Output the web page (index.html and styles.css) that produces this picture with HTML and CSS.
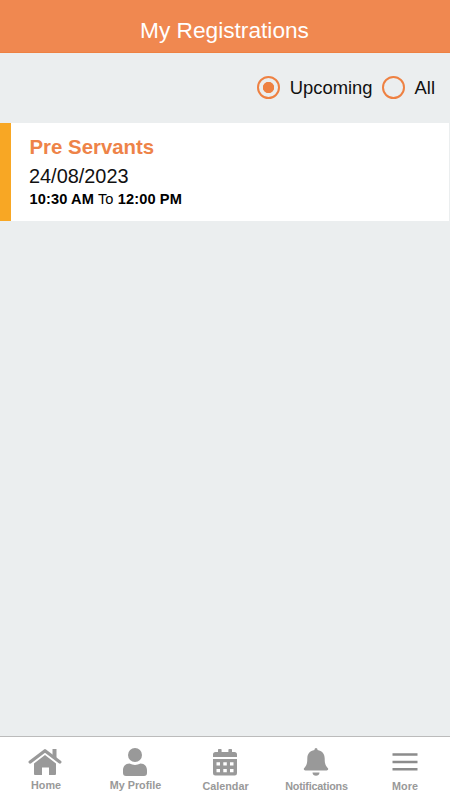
FILE: index.html
```html
<!DOCTYPE html>
<html lang="en">
<head>
<meta charset="utf-8">
<title>My Registrations</title>
<link rel="stylesheet" href="styles.css">
</head>
<body>
<div class="app">
  <header class="header"><h1 class="title">My Registrations</h1></header>
  <main class="content">
    <div class="filters">
      <div class="option"><span class="radio checked"></span><span>Upcoming</span></div>
      <div class="option"><span class="radio"></span><span>All</span></div>
    </div>
    <article class="card">
      <h2 class="name">Pre Servants</h2>
      <div class="date">24/08/2023</div>
      <div class="time"><b>10:30 AM</b> To <b>12:00 PM</b></div>
    </article>
  </main>
  <nav class="tabs">
    <a class="tab home">
      <svg class="icon wide" viewBox="0 0 34 28"><path d="M2.200 14 17 2.700l14.800 11.300" fill="none" stroke="currentColor" stroke-width="3.300" stroke-linecap="round" stroke-linejoin="round"/><path d="M24.500 1h4v9.500l-4-3.200zM17 7l11 8.400V25.900a1 1 0 0 1-1 1h-6v-7.400h-7v7.400H7a1 1 0 0 1-1-1V15.400z"/></svg>
      <span>Home</span>
    </a>
    <a class="tab profile">
      <svg class="icon" viewBox="0 0 26 28"><circle cx="13" cy="7" r="7"/><path d="M7.500 15.500c3.500 1.900 7.500 1.900 11 0 4.200 0 6.500 3 6.500 7v2.500a3 3 0 0 1-3 3H4a3 3 0 0 1-3-3v-2.500c0-4 2.300-7 6.500-7z"/></svg>
      <span>My Profile</span>
    </a>
    <a class="tab calendar">
      <svg class="icon" viewBox="0 0 26 28"><path fill-rule="evenodd" d="M1 9V6.500A2.500 2.500 0 0 1 3.500 4H6V1.700q0-.7.700-.7h2.200q.7 0 .7.700V4h6.800V1.700q0-.7.700-.7h2.200q.7 0 .7.700V4h2.500A2.500 2.500 0 0 1 25 6.500V9zM1 11h24v14.300a2.300 2.300 0 0 1-2.300 2.300H3.300A2.300 2.300 0 0 1 1 25.300zM4.500 14.200v3.300H8v-3.300zM11.300 14.200v3.300h3.500v-3.300zM18 14.200v3.300h3.500v-3.300zM4.500 20.900v3.300H8v-3.300zM11.300 20.900v3.300h3.500v-3.300zM18 20.900v3.300h3.500v-3.300z"/></svg>
      <span>Calendar</span>
    </a>
    <a class="tab notifications">
      <svg class="icon" viewBox="0 0 26 28"><path d="M11.500 2.100V1.600a1.500 1.500 0 0 1 3 0v.5c4.600.8 7.200 4 7.200 8.400 0 6 1.100 7.300 3 9.400 1.100 1.200.3 2.700-1.100 2.700H2.400c-1.400 0-2.200-1.500-1.100-2.700 1.900-2.100 3-3.400 3-9.400 0-4.400 2.600-7.600 7.200-8.400zM9.500 24.500h7c0 4.300-7 4.300-7 0z"/></svg>
      <span>Notifications</span>
    </a>
    <a class="tab more">
      <svg class="icon" viewBox="0 0 26 28"><path d="M.5 5.200h25v2.600H.5zM.5 12.700h25v2.600H.5zM.5 19.900h25v2.600H.5z"/></svg>
      <span>More</span>
    </a>
  </nav>
</div>
</body>
</html>
```
FILE: styles.css
```css
* { box-sizing: border-box; }
body { margin: 0; font-family: "Liberation Sans", Arial, sans-serif; color: #111; }
.app { display: flex; flex-direction: column; height: 800px; background: #ebeeef; }
.header { height: 53px; padding-top: 18px; background: #f08850; border-bottom: 1px solid #ee8142; text-align: center; }
.title { margin: 0; padding-right: 1px; font-size: 22.7px; line-height: 25px; font-weight: 400; color: #fff; }
.content { flex: 1; }
.filters { display: flex; justify-content: flex-end; gap: 9px; height: 70px; padding: 22px 15px 0 0; font-size: 18.4px; line-height: 25px; }
.option { display: flex; gap: 10px; }
.radio { width: 23px; height: 23px; margin-top: 1px; border: 2px solid #ee8142; border-radius: 50%; }
.checked { background: radial-gradient(circle, #ee8142 5.3px, transparent 6px); }
.card { height: 98px; margin-right: 1px; padding: 11px 0 0 18px; border-left: 11px solid #f8a724; background: #fff; }
.name { margin: 0; padding-left: 0.5px; font-size: 20.4px; line-height: 26px; font-weight: 700; color: #ee8348; }
.date { padding-top: 1px; font-size: 19.9px; line-height: 30px; }
.time { padding-left: 0.5px; font-size: 14.6px; letter-spacing: 0.12px; line-height: 17px; color: #000; }
.tabs { display: grid; grid-template-columns: repeat(5, 1fr); height: 64px; padding-top: 11px; background: #fff; border-top: 1px solid #bbb; color: #999; }
.tab { display: flex; flex-direction: column; align-items: center; gap: 2px; font-size: 10.8px; line-height: 14px; font-weight: 700; white-space: nowrap; }
.icon { display: block; width: 26px; height: 28px; fill: currentColor; }
.wide { width: 34px; }
.home span { padding-left: 2px; }
.profile span { padding-left: 1px; }
.calendar, .notifications, .more { gap: 3px; }
.calendar span { padding-left: 1px; }
.notifications { padding-left: 1px; font-size: 10.8px; letter-spacing: -0.22px; }
.notifications span { padding-left: 2px; }
.more .icon { color: #8c8c8c; }
```
